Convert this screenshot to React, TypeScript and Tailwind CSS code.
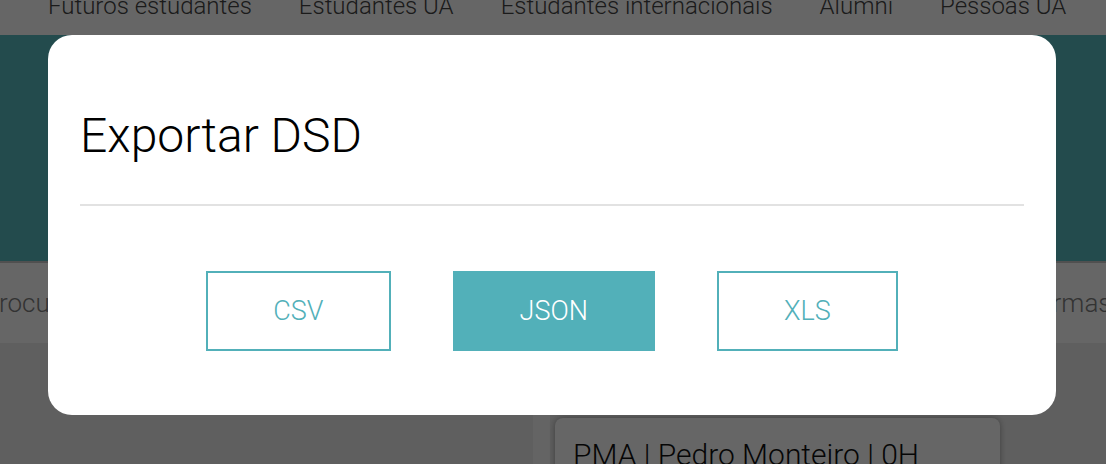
import React from 'react';

const navItems = ['Futuros estudantes', 'Estudantes UA', 'Estudantes internacionais', 'Alumni', 'Pessoas UA'];
const formats = ['CSV', 'JSON', 'XLS'];

export default function App() {
  const selected = 'JSON';

  return (
    <div
      className="relative w-[1106px] h-[464px] overflow-hidden bg-[#eeeeee]"
      style={{ fontFamily: 'Roboto, "Noto Sans", sans-serif' }}
    >
      {/* page behind the modal */}
      <div className="flex h-[35px] items-start gap-[47px] overflow-hidden bg-white pl-12">
        {navItems.map((item) => (
          <span key={item} className="-mt-[6px] whitespace-nowrap text-[24px] leading-[24px] font-light text-[#444]">
            {item}
          </span>
        ))}
      </div>

      <div className="h-[226px] bg-[#58bcc1]" />
      <div className="h-[2px] bg-[#c8c8c8]" />

      <div className="flex h-[80px] items-center bg-white">
        <div className="w-[1024px] shrink-0">
          <span className="-ml-[17px] block text-[26px] font-light text-[#808080]">Procurar docente</span>
        </div>
        <span className="shrink-0 whitespace-nowrap text-[26px] font-light text-[#808080]">Turmas</span>
      </div>

      <div className="flex">
        <div className="w-[533px]" />
        <div className="h-[200px] w-[17px] bg-[#fafafa]" />
        <div className="mt-[75px] ml-[5px] h-[120px] w-[445px] rounded-lg bg-white pl-[18px] pt-[14px] shadow-[0_0_6px_rgba(0,0,0,0.35)]">
          <span className="text-[30px] font-light text-[#111]">PMA | Pedro Monteiro | 0H</span>
        </div>
      </div>

      {/* overlay */}
      <div className="absolute inset-0 bg-black/60" />

      {/* modal */}
      <div className="absolute left-[48px] top-[35px] h-[380px] w-[1008px] rounded-3xl bg-white px-8">
        <h2 className="pt-[77px] text-[48px] leading-[48px] font-light text-black">Exportar DSD</h2>
        <div className="mt-[44px] h-[2px] bg-[#e2e2e2]" />
        <div className="mt-[65px] flex justify-center gap-[62px]">
          {formats.map((f) => (
            <button
              key={f}
              className={
                f === selected
                  ? 'flex h-[80px] items-center bg-[#52b0b9] px-[67px] text-[27px] font-light text-white'
                  : 'flex h-[80px] items-center border-2 border-[#52b0b9] bg-white px-[65px] text-[27px] font-light text-[#52b0b9]'
              }
            >
              {f}
            </button>
          ))}
        </div>
      </div>
    </div>
  );
}
